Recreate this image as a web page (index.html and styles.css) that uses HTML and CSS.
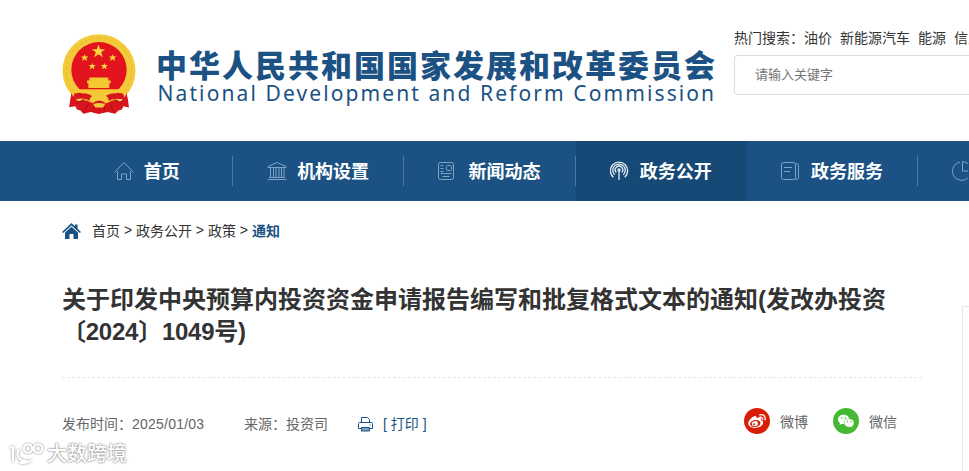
FILE: index.html
```html
<!DOCTYPE html>
<html lang="zh-CN">
<head>
<meta charset="utf-8">
<title>国家发展和改革委员会</title>
<link rel="stylesheet" href="styles.css">
</head>
<body>
<div class="header">
<div class="logo">
<svg class="emblem" viewBox="38 27 219 240" preserveAspectRatio="none">
<circle cx="147.500" cy="136" r="108" fill="#f3cb3a"/>
<circle cx="147.500" cy="136" r="97" fill="none" stroke="#e3b02a" stroke-width="2" stroke-dasharray="13 5"/>
<circle cx="147.500" cy="133" r="82" fill="#e2131c"/>
<path d="M146 58l5 14h15l-12 9 5 15-13-9-13 9 5-15-12-9h15zM105 87l3 7h8l-6 5 2 8-7-5-8 5 3-8-6-5h8zM188 87l3 7h8l-6 5 2 8-7-5-8 5 3-8-6-5h8zM128 113l2 6h8l-6 5 2 8-6-5-8 5 3-8-6-5h8zM163 113l3 6h8l-6 5 2 8-7-5-7 5 3-8-6-5h8z" fill="#f7d53e"/>
<path d="M119 156h56v9h-56zM112 165h70v8h-70zM116 173h62v14h-62zM75 191h144l-8 13q-63 14-128 0z" fill="#f5c832"/>
<path d="M75 203q36-8 73 14 37-22 70-14l10 22q-34-15-66 8h-28q-34-25-66-8z" fill="#d8141c"/>
<path d="M94 200q30-2 44 18M200 200q-30-2-44 18" stroke="#f3cb3a" stroke-width="6" fill="none"/>
<path d="M119 226q0-20 29-20t29 20l-9 6q-20-16-40 0z" fill="#f3cb3a"/>
<path d="M66 202q-4 22-7 42l19-3q3 13 14 12l9 10 22-5 24 6 26-6 22 5 11-10q11 1 13-12l17 4q-2-24-7-43-5 19-21 25-15-8-33 3-25 10-51 0-20-11-34-3-18-8-24-25z" fill="#d8141c"/>
<path d="M80 234q12-8 24-13M217 234q-12-8-24-13M105 256l12-22M191 256l-12-22M132 257v-15M164 257v-15" stroke="#b01217" stroke-width="3" fill="none"/>
<path d="M130 236q18-9 36 0l-7 9h-22z" fill="#f3cb3a"/>
</svg>
<div class="logo-text">
<div class="name-cn">中华人民共和国国家发展和改革委员会</div>
<div class="name-en">National Development and Reform Commission</div>
</div>
</div>
<div class="search">
<div class="hot"><span>热门搜索：</span><a>油价</a><a>新能源汽车</a><a>能源</a><a>信息</a></div>
<div class="search-box">请输入关键字</div>
</div>
</div>

<div class="nav">
<div class="nav-item line">
<svg class="nav-icon" viewBox="0 0 20 20"><path d="M.5 11.500L9 2.400q1-.9 2 0l8.500 9.100M3.500 10v8.500h4v-5.500h5v5.500h4V10"/></svg>
<span>首页</span>
</div>
<div class="nav-item line">
<svg class="nav-icon" viewBox="0 0 20 20"><path d="M1 6.500V5.500L10 1.500l9 4v1zM.5 18.500h19M2 16.500h16M3.500 7v9.500M6.500 7v9.500M9 7v9.500M12 7v9.500M14.500 7v9.500M17 7v9.500"/></svg>
<span>机构设置</span>
</div>
<div class="nav-item line">
<svg class="nav-icon" viewBox="0 0 20 20"><rect x=".5" y="1.500" width="15" height="17" rx="2"/><path d="M2.500 4.500h3M2.500 7.500h3M2.500 10.500h3M2.500 12.500h11M4.500 15.500h7"/><rect x="8.500" y="4.500" width="5" height="5" rx="1"/></svg>
<span>新闻动态</span>
</div>
<div class="nav-item active">
<svg class="nav-icon" viewBox="0 0 20 20"><path d="M3.300 16.200A8.600 8.600 0 1 1 14.700 16.200M4.800 13.800A6.200 6.200 0 1 1 13.200 13.800M6.300 11.500A3.700 3.700 0 1 1 11.700 11.500M9 9v10"/><circle cx="9" cy="9" r="1"/></svg>
<span>政务公开</span>
</div>
<div class="nav-item line">
<svg class="nav-icon" viewBox="0 0 20 20"><rect x=".5" y="1.500" width="14" height="17" rx="2"/><path d="M3 6.500h8M3 10.500h6M14.500 2.500q3 0 3 2v12q0 2-3 2"/></svg>
<span>政务服务</span>
</div>
<div class="nav-item">
<svg class="nav-icon" viewBox="0 0 20 20"><path d="M8 1.100A9.200 9.200 0 1 0 18.700 12M10.500.5v9.500h9A9.500 9.500 0 0 0 10.500.5z"/></svg>
</div>
</div>

<div class="main">
<div class="article">
<div class="crumb">
<svg class="home" viewBox="0 0 19 16"><path d="M9.500 0l3.500 3.300V1.500h2.500v4.100L19 8.900 17.800 10 9.500 2.500 1.200 10 0 8.900z"/><path d="M9.500 3.700L16 9.600V16h-4.500v-5h-4v5H3V9.600z"/></svg>
<a>首页</a><i>&gt;</i><a>政务公开</a><i>&gt;</i><a>政策</a><i>&gt;</i><b>通知</b>
</div>
<h1>关于印发中央预算内投资资金申请报告编写和批复格式文本的通知(发改办投资<span class="num">〔2024〕1049号)</span></h1>
<div class="meta">
<span class="time">发布时间：<span class="date">2025/01/03</span></span>
<span class="from">来源：投资司</span>
<div class="print">
<svg viewBox="0 0 15 15"><path d="M3.500 6V.5h6l2 2V6M3 11.500H.5V6.500q0-1 1-1h12q1 0 1 1v5H12"/><path d="M3.500 10.500h8v3.500h-8z" fill="#7f9fb9"/><path d="M11.500 8h1"/></svg>
<a>[ 打印 ]</a>
</div>
<div class="share">
<svg viewBox="0 0 26 26"><circle cx="13" cy="13" r="13" fill="#d81e06"/><path d="M10.600 8.100q2.100-.8 2.100 1.800 4.800-1.800 4.500 1.100 0 .6-.3 1.100 3 1.100 2 3.700-1.600 4.100-8 4.100-6.500-.3-6.700-4.300.4-4.500 6.400-7.500z" fill="#fff"/><ellipse cx="11.300" cy="15.500" rx="5.200" ry="3.500" transform="rotate(-7 11.300 15.500)" fill="#d81e06"/><ellipse cx="10.900" cy="15.700" rx="3.100" ry="2.500" transform="rotate(-15 10.900 15.700)" fill="#fff"/><circle cx="10" cy="16.300" r="1" fill="#d81e06"/><path d="M15.700 6.800q5.700-1 5.500 5M16 9.200q2.800-.3 2.700 2.300" fill="none" stroke="#fff" stroke-width="1.300" stroke-linecap="round"/></svg>
<span>微博</span>
<svg viewBox="0 0 26 26"><circle cx="13" cy="13" r="13" fill="#45b833"/><path d="M10.700 6.700c-3.300 0-5.700 2.100-5.700 4.800 0 1.600.8 2.800 2.100 3.700l-.5 1.800 2.100-1.100q1 .2 2 .2c3.300 0 5.700-2 5.700-4.600s-2.500-4.800-5.700-4.800z" fill="#fff"/><path d="M16.200 10.800c-3 0-5 1.900-5 4.200s2.100 4.200 5 4.200l1.700-.3 1.800 1-.5-1.600q1.900-1.300 1.900-3.300c0-2.300-2.100-4.200-4.900-4.200z" fill="#fff" stroke="#45b833" stroke-width=".5"/><g fill="#45b833"><circle cx="8.700" cy="10" r=".8"/><circle cx="12.600" cy="10" r=".8"/><circle cx="14.500" cy="13.700" r=".7"/><circle cx="17.900" cy="13.700" r=".7"/></g></svg>
<span>微信</span>
</div>
</div>
</div>
<div class="side"></div>
</div>

<div class="mark">
<svg viewBox="0 0 38 24"><path d="M2 6l3-1v15M11 7q-3 5 0 9 3 4 8 3M11 20q6 3 12-2"/><circle cx="20" cy="6.500" r="4.200"/><circle cx="30" cy="6.500" r="4.200"/></svg>
<span>大数跨境</span>
</div>
</body>
</html>
```
FILE: styles.css
```css
body {
margin: 0;
height: 471px;
overflow: hidden;
position: relative;
background: #fff;
color: #333;
font-family: "Liberation Sans", "Noto Sans CJK SC", sans-serif;
font-size: 14px;
}

svg {
display: block;
flex-shrink: 0;
}

/* 头部 */
.header {
display: flex;
height: 141px;
padding-left: 62px;
box-sizing: border-box;
}

.logo {
display: flex;
width: 672px;
flex-shrink: 0;
}

.emblem {
width: 74px;
height: 81px;
margin-top: 34px;
}

.logo-text {
margin: 45px 0 0 20px;
color: #1b5283;
white-space: nowrap;
}

.name-cn {
font-size: 31px;
font-weight: 900;
line-height: 44px;
letter-spacing: 2px;
}

.name-en {
font-family: "Noto Sans", sans-serif;
font-size: 21px;
line-height: 24px;
letter-spacing: 2.1px;
margin-top: -8px;
padding-left: 1.500px;
}

.search {
padding-top: 28px;
flex-shrink: 0;
}

.hot {
line-height: 20px;
white-space: nowrap;
}

.hot a {
margin-right: 8px;
}

.search-box {
width: 235px;
height: 40px;
margin-top: 7px;
padding-left: 20px;
box-sizing: border-box;
border: 1px solid #ddd;
border-right: 0;
border-radius: 4px 0 0 4px;
font-size: 13px;
line-height: 38px;
color: #757575;
}

/* 导航 */
.nav {
display: flex;
height: 60px;
padding-left: 61.700px;
background: #1b5283;
}

.nav-item {
display: flex;
align-items: center;
justify-content: center;
gap: 10px;
width: 171.300px;
flex-shrink: 0;
position: relative;
color: #fff;
font-size: 18px;
font-weight: bold;
}

.nav-item span {
margin: -2px 1px 0 0;
}

.nav-item:last-child {
width: 50px;
box-sizing: border-box;
justify-content: flex-start;
padding-left: 33.800px;
overflow: hidden;
}

.line::after {
content: "";
position: absolute;
right: 0;
top: 15px;
width: 1px;
height: 30px;
background: #4a7ba4;
}

.active {
background: #164976;
}

.nav-icon {
width: 20px;
height: 20px;
fill: none;
stroke: #7fa3c2;
stroke-width: 1;
}

.active .nav-icon {
stroke: #e4edf5;
stroke-width: 1.3;
}

/* 正文 */
.main {
display: flex;
}

.article {
width: 860px;
margin-left: 62px;
flex-shrink: 0;
}

.crumb {
display: flex;
align-items: center;
height: 20px;
margin-top: 20px;
}

.crumb a, .crumb i, .crumb b {
margin-top: -2px;
}

.crumb i {
font-style: normal;
margin-left: 3.900px;
margin-right: 3.900px;
}

.crumb b {
color: #1b5283;
}

.home {
width: 19px;
height: 16px;
margin-right: 11px;
fill: #1b5283;
}

h1 {
margin: 0;
padding: 43px 0 29px;
border-bottom: 1px dashed #e6e6e6;
font-size: 24px;
line-height: 32px;
}

.num {
letter-spacing: -.25px;
}

.meta {
display: flex;
align-items: center;
height: 26px;
margin-top: 32px;
color: #666;
}

.time {
width: 182px;
}

.date {
letter-spacing: .22px;
}

.from {
width: 114px;
}

.print {
display: flex;
align-items: center;
gap: 10px;
color: #1b5283;
}

.print svg {
width: 15px;
height: 15px;
margin-top: 3px;
fill: none;
stroke: #1b5283;
}

.share {
display: flex;
align-items: center;
margin: -5px 0 0 auto;
}

.share svg {
width: 26px;
height: 26px;
margin-right: 10px;
}

.share span {
margin-right: 25px;
}

.side {
width: 6px;
height: 164px;
margin: 105px 0 0 40px;
flex-shrink: 0;
border: 1px solid #e6e6e6;
border-width: 1px 0 0 1px;
}

/* 左下角水印 */
.mark {
position: absolute;
left: 8px;
top: 442px;
display: flex;
align-items: center;
gap: 1px;
color: #fff;
font-size: 20px;
font-weight: 500;
line-height: 24px;
text-shadow: 0 0 2px #888, 0 0 2px #999;
}

.mark svg {
width: 38px;
height: 24px;
fill: none;
stroke: #fff;
stroke-width: 2.2;
filter: drop-shadow(0 0 1px #888);
}
```
